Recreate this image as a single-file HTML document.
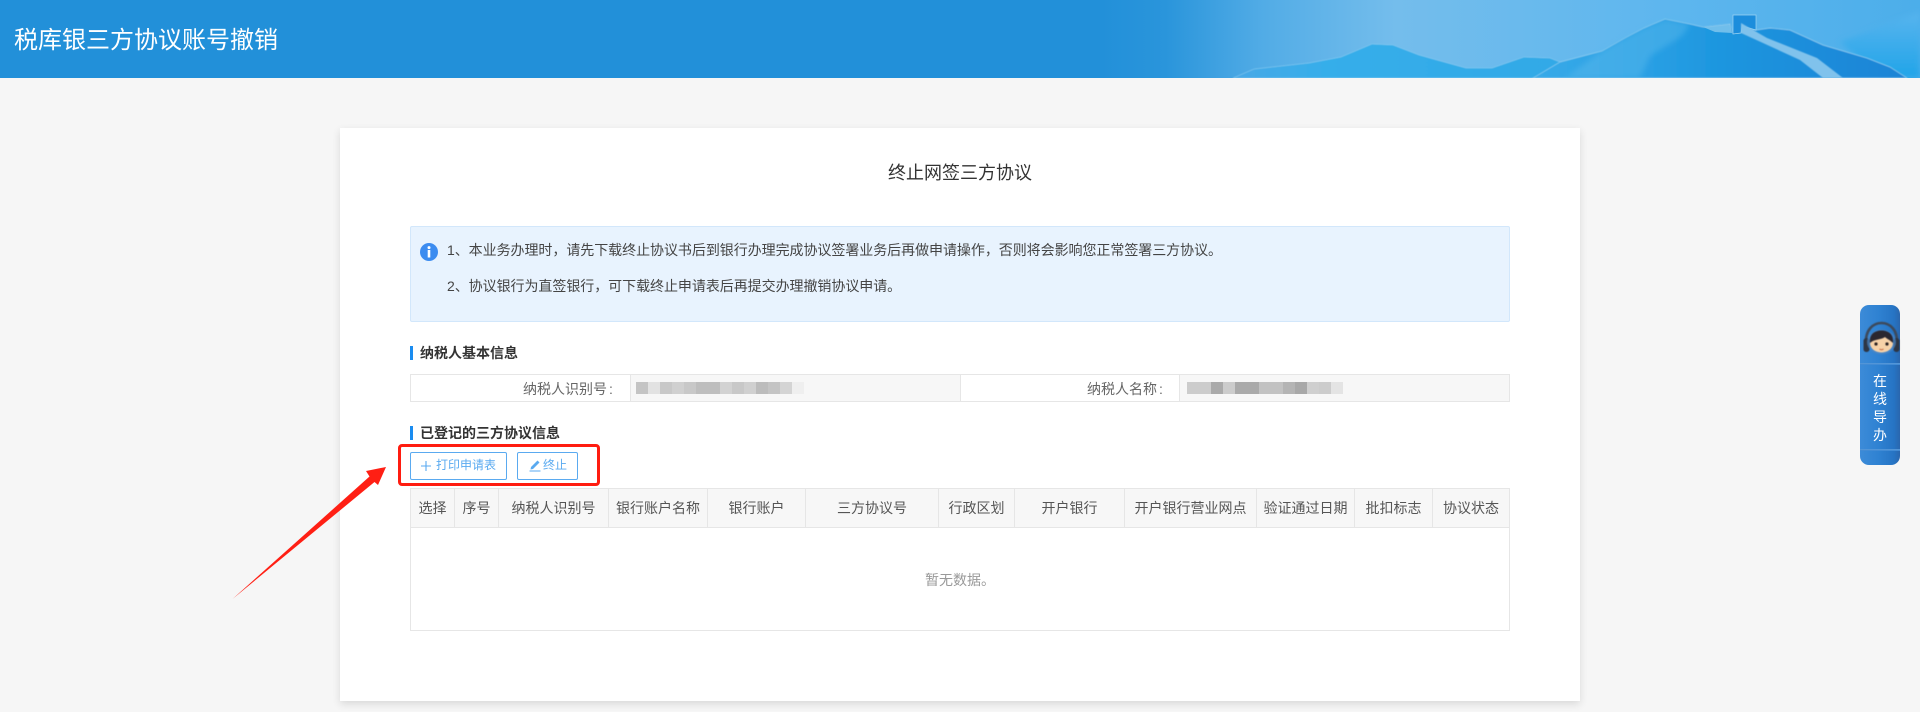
<!DOCTYPE html>
<html lang="zh-CN">
<head>
<meta charset="utf-8">
<title>税库银三方协议账号撤销</title>
<style>
html,body{margin:0;padding:0;width:1920px;height:712px;overflow:hidden;background:#f6f6f6;font-family:"Liberation Sans","Noto Sans CJK SC",sans-serif;color:#333}
*{box-sizing:border-box}
.a{position:absolute}
.hdr{left:0;top:0;width:1920px;height:78px;background:#2290d9;overflow:hidden}
.ttl{left:14px;top:23px;font-size:24px;line-height:36px;color:#fff;white-space:nowrap}
.card{left:340px;top:128px;width:1240px;height:573px;background:#fff;box-shadow:0 3px 8px rgba(0,0,0,.12)}
.h1{left:340px;top:159px;width:1240px;text-align:center;font-size:18px;line-height:28px;color:#333}
.info{left:410px;top:226px;width:1100px;height:96px;background:#e8f3fe;border:1px solid #d2e7fb;border-radius:2px}
.ln{left:447px;font-size:14px;line-height:20px;color:#444;white-space:nowrap;letter-spacing:-.05px}
.bar{left:410px;width:3px;height:14px;background:#1a8cf0}
.sec{left:420px;font-size:14px;font-weight:bold;line-height:20px;color:#333;white-space:nowrap}
.row{left:410px;top:374px;width:1100px;height:28px;border:1px solid #e6e6e6;background:#fff}
.v{top:375px;height:26px;background:#f7f7f7}
.lb{top:379px;font-size:14px;line-height:20px;color:#666;white-space:nowrap}
.lb span{margin-left:2px}
.blur{top:382px;height:12px;display:flex;filter:blur(.3px)}
.blur i{display:block;height:12px;width:12px}
.btn{top:452px;height:28px;border:1px solid #5aaaf0;border-radius:2px;background:#fff}
.bt{top:456px;font-size:12px;line-height:18px;color:#5aaaf0;white-space:nowrap}
.red{left:398px;top:444px;width:202px;height:42px;border:3px solid #ff1c10;border-radius:4px}
.tb{left:410px;top:488px;width:1100px;height:143px;border:1px solid #e6e6e6;background:#fff}
.th{left:411px;top:489px;width:1098px;height:39px;background:#f7f7f7;border-bottom:1px solid #e6e6e6;display:flex}
.th div{height:38px;line-height:38px;font-size:14px;color:#555;text-align:center;border-right:1px solid #e6e6e6;white-space:nowrap;flex:none}
.th div:last-child{border-right:0}
.empty{left:411px;top:570px;width:1098px;text-align:center;font-size:14px;line-height:20px;color:#999}
.fw{left:1860px;top:305px;width:40px;height:160px;border-radius:9px;background:linear-gradient(90deg,#3c8bd8 0%,#2f82d2 45%,#2674c4 85%,#2a66ad 100%)}
.fl{left:1860px;width:40px;height:2px;background:linear-gradient(#5a9ad8,#3a86d2)}
.ft{left:1860px;width:40px;text-align:center;font-size:14px;line-height:18px;color:#fff}
</style>
</head>
<body>
<div class="a hdr">
<svg class="a" style="left:0;top:0" width="1920" height="78" viewBox="0 0 1920 78">
<defs>
<linearGradient id="sky" x1="0" x2="1" y1="0" y2="0">
<stop offset="0" stop-color="#2290d9"/>
<stop offset=".08" stop-color="#2a95db"/>
<stop offset=".2" stop-color="#52ace6"/>
<stop offset=".36" stop-color="#74bdec"/>
<stop offset=".7" stop-color="#5db6ee"/>
<stop offset="1" stop-color="#4caeea"/>
</linearGradient>
<linearGradient id="rg" x1="0" x2="0" y1="0" y2="1">
<stop offset="0" stop-color="#58b4ee"/>
<stop offset="1" stop-color="#20a4e8"/>
</linearGradient>
<linearGradient id="m1" x1="0" x2="1" y1="0" y2="0">
<stop offset="0" stop-color="#48a8e6"/>
<stop offset=".25" stop-color="#36aeea"/>
<stop offset="1" stop-color="#30a8e6"/>
</linearGradient>
<linearGradient id="m2" x1="0" x2="1" y1="0" y2="0">
<stop offset="0" stop-color="#38aae8"/>
<stop offset=".3" stop-color="#2aa0e4"/>
<stop offset=".55" stop-color="#1a94de"/>
<stop offset="1" stop-color="#1c84d6"/>
</linearGradient>
<filter id="sb"><feGaussianBlur stdDeviation=".5"/></filter>
<filter id="sc"><feGaussianBlur stdDeviation="3"/></filter>
</defs>
<rect x="1100" y="0" width="820" height="78" fill="url(#sky)"/>
<path d="M1840 42L1920 12V78H1880Z" fill="url(#rg)" filter="url(#sc)"/>
<path d="M1233 78L1254 69 1309 63 1341 57 1372 44 1393 45 1419 55 1466 68 1492 68 1524 57 1550 58 1560 62 1600 78Z" fill="url(#m1)" stroke="#8fd0f2" stroke-width=".5" filter="url(#sb)"/>
<path d="M1533 78L1560 62 1602 51 1625 38 1644 28 1665 19 1690 24 1703 27 1730 24 1733 33 1756 30 1770 28 1790 30 1823 45 1867 58 1890 67 1907 78Z" fill="url(#m2)" stroke="#8ccdf0" stroke-width=".7" filter="url(#sb)"/>
<path d="M1565 78L1602 51 1625 38 1644 28 1665 19 1690 24 1682 36 1650 56 1640 78Z" fill="#5cbaec" opacity=".45" filter="url(#sc)"/>
<path d="M1703 27L1730 24 1732 33 1715 32Z" fill="#86c8ee" opacity=".8"/>
<path d="M1733 15H1756V30L1742 26 1741 33 1733 34Z" fill="#1c8ddc" stroke="#9fd4f2" stroke-width=".7"/>
<path d="M1741 23L1767 38 1817 58 1843 78H1823L1800 60 1763 43 1741 33Z" fill="#80c2ec" filter="url(#sb)"/>
</svg>
<div class="a ttl">税库银三方协议账号撤销</div>
</div>

<div class="a card"></div>
<div class="a h1">终止网签三方协议</div>

<div class="a info"></div>
<svg class="a" style="left:420px;top:243px" width="18" height="18" viewBox="0 0 18 18"><circle cx="9" cy="9" r="9" fill="#3c8cf0"/><circle cx="9" cy="4.6" r="1.5" fill="#fff"/><rect x="7.7" y="7" width="2.6" height="7.5" fill="#fff"/></svg>
<div class="a ln" style="top:240px">1、本业务办理时，请先下载终止协议书后到银行办理完成协议签署业务后再做申请操作，否则将会影响您正常签署三方协议。</div>
<div class="a ln" style="top:276px">2、协议银行为直签银行，可下载终止申请表后再提交办理撤销协议申请。</div>

<div class="a bar" style="top:346px"></div>
<div class="a sec" style="top:343px">纳税人基本信息</div>

<div class="a row"></div>
<div class="a v" style="left:630px;width:330px"></div>
<div class="a" style="left:630px;top:375px;width:1px;height:26px;background:#e6e6e6"></div>
<div class="a" style="left:960px;top:375px;width:1px;height:26px;background:#e6e6e6"></div>
<div class="a v" style="left:1179px;width:330px"></div>
<div class="a" style="left:1179px;top:375px;width:1px;height:26px;background:#e6e6e6"></div>
<div class="a lb" style="left:523px">纳税人识别号<span>:</span></div>
<div class="a lb" style="left:1087px">纳税人名称<span>:</span></div>
<div class="a blur" style="left:636px">
<i style="background:#c4c4c4"></i><i style="background:#e2e2e2"></i><i style="background:#c8c8c8"></i><i style="background:#d0d0d0"></i><i style="background:#c8c8c8"></i><i style="background:#bebebe"></i><i style="background:#bebebe"></i><i style="background:#d2d2d2"></i><i style="background:#c8c8c8"></i><i style="background:#d0d0d0"></i><i style="background:#bcbcbc"></i><i style="background:#c4c4c4"></i><i style="background:#d4d4d4"></i><i style="background:#efefef"></i>
</div>
<div class="a blur" style="left:1187px">
<i style="background:#ccc"></i><i style="background:#ccc"></i><i style="background:#aaa"></i><i style="background:#ccc"></i><i style="background:#aaa"></i><i style="background:#aaa"></i><i style="background:#c2c2c2"></i><i style="background:#c2c2c2"></i><i style="background:#b4b4b4"></i><i style="background:#a8a8a8"></i><i style="background:#cfcfcf"></i><i style="background:#ccc"></i><i style="background:#e4e4e4"></i>
</div>

<div class="a bar" style="top:426px"></div>
<div class="a sec" style="top:423px">已登记的三方协议信息</div>

<div class="a btn" style="left:410px;width:97px"></div>
<svg class="a" style="left:420px;top:460px" width="12" height="12" viewBox="0 0 12 12"><path d="M6 1V11M1 6H11" stroke="#5aaaf0" stroke-width="1.1" fill="none"/></svg>
<div class="a bt" style="left:436px">打印申请表</div>
<div class="a btn" style="left:517px;width:61px"></div>
<svg class="a" style="left:529px;top:459px" width="12" height="13" viewBox="0 0 12 13"><path d="M2 8L8.500 1.500 10.500 3.500 4 10 1.500 10.500Z" fill="#5aaaf0"/><path d="M0.500 12H11.500" stroke="#5aaaf0" stroke-width="1"/></svg>
<div class="a bt" style="left:543px">终止</div>
<div class="a red"></div>

<div class="a tb"></div>
<div class="a th">
<div style="width:44px">选择</div><div style="width:44px">序号</div><div style="width:110px">纳税人识别号</div><div style="width:99px">银行账户名称</div><div style="width:98px">银行账户</div><div style="width:133px">三方协议号</div><div style="width:76px">行政区划</div><div style="width:110px">开户银行</div><div style="width:132px">开户银行营业网点</div><div style="width:98px">验证通过日期</div><div style="width:78px">批扣标志</div><div style="width:76px">协议状态</div>
</div>
<div class="a empty">暂无数据。</div>

<svg class="a" style="left:0;top:0;pointer-events:none" width="1920" height="712" viewBox="0 0 1920 712">
<path d="M232.500 599L369.500 476.500 366 471 386 467 378 485 374.500 482Z" fill="#ff1f14"/>
</svg>

<div class="a fw"></div>
<svg class="a" style="left:1860px;top:318px;filter:blur(.4px)" width="40" height="46" viewBox="0 0 40 46">
<path d="M6 26C5 12 13 5 21.500 5S38 12 37 26" fill="none" stroke="#3d4a5c" stroke-width="2.600"/>
<rect x="3.500" y="20" width="6" height="14" rx="2.800" fill="#2e3644"/>
<rect x="33.500" y="20" width="6" height="14" rx="2.800" fill="#2e3644"/>
<ellipse cx="21.500" cy="24" rx="14.500" ry="12.500" fill="#4c86c4" opacity=".7"/>
<ellipse cx="21.500" cy="25" rx="11.500" ry="9.500" fill="#f7d2a8"/>
<path d="M10 25C9 16 15 12.500 21.500 12.500S34 16 33 25C30 22 27 21 25 19 21 22 14 21 10 25Z" fill="#2b2730"/>
<circle cx="16" cy="26" r="1.600" fill="#2a2020"/>
<circle cx="27" cy="26" r="1.600" fill="#2a2020"/>
<path d="M19.500 31Q21.500 32.500 23.500 31" stroke="#c0603a" stroke-width="1" fill="none"/>
</svg>
<div class="a fl" style="top:363px"></div>
<div class="a fl" style="top:449px"></div>
<div class="a ft" style="top:372px">在</div>
<div class="a ft" style="top:390px">线</div>
<div class="a ft" style="top:408px">导</div>
<div class="a ft" style="top:426px">办</div>
</body>
</html>
